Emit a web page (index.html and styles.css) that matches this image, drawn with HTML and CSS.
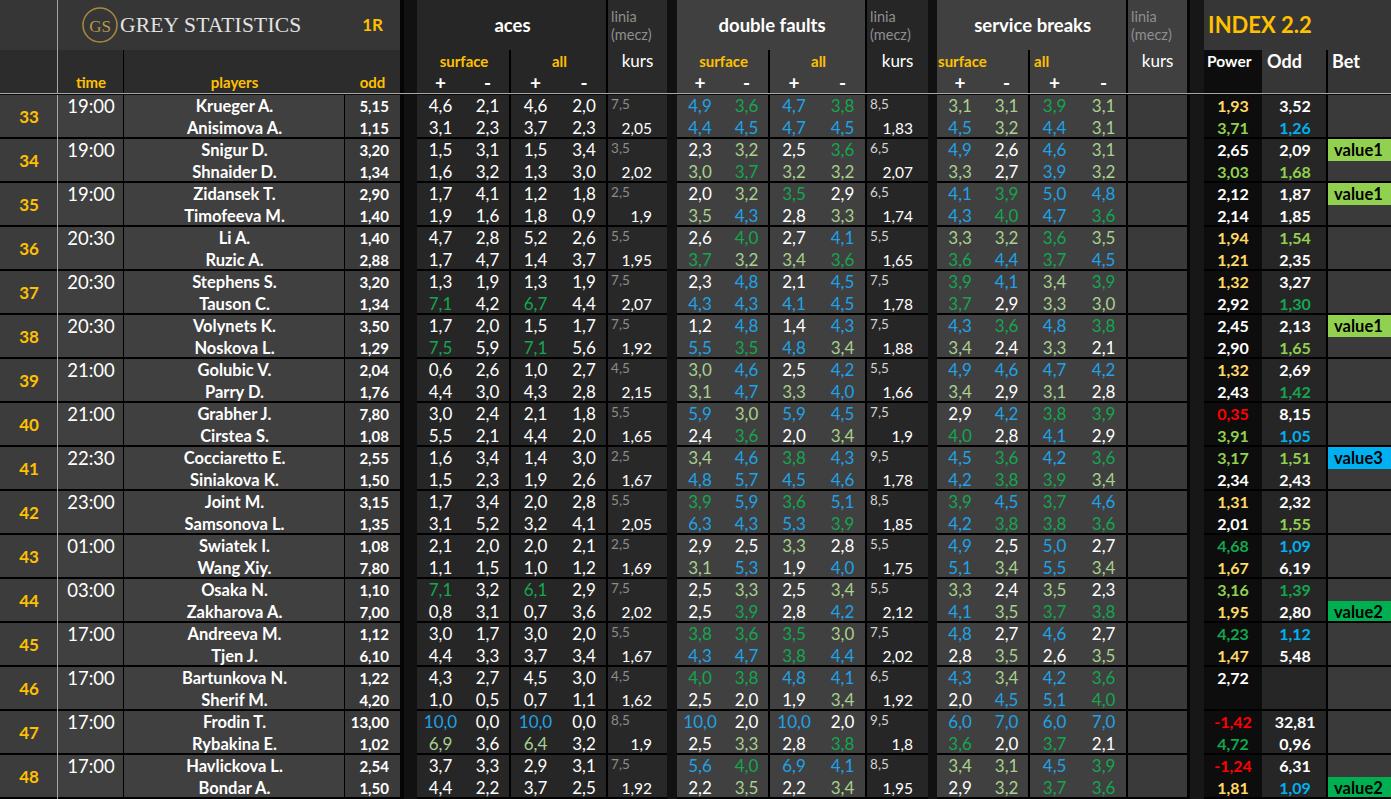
FILE: index.html
```html
<!DOCTYPE html>
<html lang="pl">
<head>
<meta charset="utf-8">
<title>Grey Statistics</title>
<link rel="stylesheet" href="styles.css">
</head>
<body>
<main class="wrap">
<table class="sheet">
<colgroup>
<col class="c-num"><col class="c-time"><col class="c-pl"><col class="c-odd"><col class="c-gap1">
<col class="c-a1"><col class="c-a2"><col class="c-a3"><col class="c-a4"><col class="c-ak"><col class="c-gap2">
<col class="c-d1"><col class="c-d2"><col class="c-d3"><col class="c-d4"><col class="c-dk"><col class="c-gap3">
<col class="c-s1"><col class="c-s2"><col class="c-s3"><col class="c-s4"><col class="c-sk"><col class="c-gap4">
<col class="c-pw"><col class="c-o2"><col class="c-bet">
</colgroup>
<thead>
<tr class="h1">
<th class="hn1"></th>
<th class="title" colspan="3"><div class="brand"><svg class="logo" viewBox="0 0 36 36" width="36" height="36"><circle cx="18" cy="18" r="17" fill="none" stroke="#a8893f" stroke-width="1.5"/><text x="18" y="24.5" text-anchor="middle" font-family="Liberation Serif, serif" font-size="17" fill="#b8964a">GS</text></svg><span class="brand-name">GREY STATISTICS</span><span class="round">1R</span></div></th>
<th class="gap ga" rowspan="3"></th>
<th class="grp dark vr" colspan="4">aces</th>
<th class="linia ak-h"><div class="linia-txt">linia<br>(mecz)</div></th>
<th class="gap" rowspan="3"></th>
<th class="grp mid vr" colspan="4">double faults</th>
<th class="linia dk-h"><div class="linia-txt">linia<br>(mecz)</div></th>
<th class="gap" rowspan="3"></th>
<th class="grp mid vr" colspan="4">service breaks</th>
<th class="linia sk-h"><div class="linia-txt">linia<br>(mecz)</div></th>
<th class="gap gd" rowspan="3"></th>
<th class="index" colspan="3">INDEX 2.2</th>
</tr>
<tr class="h2">
<th class="hn2" rowspan="2"></th>
<th class="lab time-h" rowspan="2">time</th>
<th class="lab" rowspan="2">players</th>
<th class="lab" rowspan="2">odd</th>
<th class="sub dark vr" colspan="2">surface</th>
<th class="sub dark vr" colspan="2">all</th>
<th class="kurs-h ak-h" rowspan="2">kurs</th>
<th class="sub mid vr" colspan="2">surface</th>
<th class="sub mid vr" colspan="2">all</th>
<th class="kurs-h dk-h" rowspan="2">kurs</th>
<th class="sub mid vr left" colspan="2">surface</th>
<th class="sub mid vr left2" colspan="2">all</th>
<th class="kurs-h sk-h" rowspan="2">kurs</th>
<th class="pow-h" rowspan="2">Power</th>
<th class="odd-h" rowspan="2">Odd</th>
<th class="bet-h" rowspan="2">Bet</th>
</tr>
<tr class="h3">
<th class="pm dark">+</th><th class="pm dark vr">-</th><th class="pm dark">+</th><th class="pm dark vr">-</th>
<th class="pm mid">+</th><th class="pm mid vr">-</th><th class="pm mid">+</th><th class="pm mid vr">-</th>
<th class="pm mid">+</th><th class="pm mid vr">-</th><th class="pm mid">+</th><th class="pm mid vr">-</th>
</tr>
<tr class="sep"><td colspan="26"></td></tr>
</thead>
<tbody>
<tr class="l1"><td class="num" rowspan="2">33</td><td class="time" rowspan="2">19:00</td><td class="pl">Krueger A.</td><td class="od">5,15</td><td class="gap ga" rowspan="32"></td><td>4,6</td><td class="vr">2,1</td><td>4,6</td><td class="vr">2,0</td><td class="ln">7,5</td><td class="gap" rowspan="32"></td><td class="b">4,9</td><td class="vr g">3,6</td><td class="b">4,7</td><td class="vr g">3,8</td><td class="ln lt">8,5</td><td class="gap" rowspan="32"></td><td class="lg">3,1</td><td class="vr lg">3,1</td><td class="g">3,9</td><td class="vr lg">3,1</td><td class="sk" rowspan="2"></td><td class="gap gd" rowspan="32"></td><td class="pw y">1,93</td><td class="o2">3,52</td><td class="bet"></td></tr>
<tr class="l2"><td class="pl">Anisimova A.</td><td class="od">1,15</td><td>3,1</td><td class="vr">2,3</td><td>3,7</td><td class="vr">2,3</td><td class="ku">2,05</td><td class="b">4,4</td><td class="vr b">4,5</td><td class="b">4,7</td><td class="vr b">4,5</td><td class="ku">1,83</td><td class="b">4,5</td><td class="vr lg">3,2</td><td class="b">4,4</td><td class="vr lg">3,1</td><td class="pw lm">3,71</td><td class="o2 bb">1,26</td><td class="bet"></td></tr>

<tr class="l1"><td class="num" rowspan="2">34</td><td class="time" rowspan="2">19:00</td><td class="pl">Snigur D.</td><td class="od">3,20</td><td>1,5</td><td class="vr">3,1</td><td>1,5</td><td class="vr">3,4</td><td class="ln">3,5</td><td>2,3</td><td class="vr lg">3,2</td><td>2,5</td><td class="vr g">3,6</td><td class="ln lt">6,5</td><td class="b">4,9</td><td class="vr">2,6</td><td class="b">4,6</td><td class="vr lg">3,1</td><td class="sk" rowspan="2"></td><td class="pw">2,65</td><td class="o2">2,09</td><td class="bet v1">value1</td></tr>
<tr class="l2"><td class="pl">Shnaider D.</td><td class="od">1,34</td><td>1,6</td><td class="vr">3,2</td><td>1,3</td><td class="vr">3,0</td><td class="ku">2,02</td><td class="lg">3,0</td><td class="vr g">3,7</td><td class="lg">3,2</td><td class="vr lg">3,2</td><td class="ku">2,07</td><td class="lg">3,3</td><td class="vr">2,7</td><td class="b">3,9</td><td class="vr lg">3,2</td><td class="pw lm">3,03</td><td class="o2 lm">1,68</td><td class="bet"></td></tr>

<tr class="l1"><td class="num" rowspan="2">35</td><td class="time" rowspan="2">19:00</td><td class="pl">Zidansek T.</td><td class="od">2,90</td><td>1,7</td><td class="vr">4,1</td><td>1,2</td><td class="vr">1,8</td><td class="ln">2,5</td><td>2,0</td><td class="vr lg">3,2</td><td class="g">3,5</td><td class="vr">2,9</td><td class="ln lt">6,5</td><td class="b">4,1</td><td class="vr g">3,9</td><td class="b">5,0</td><td class="vr b">4,8</td><td class="sk" rowspan="2"></td><td class="pw">2,12</td><td class="o2">1,87</td><td class="bet v1">value1</td></tr>
<tr class="l2"><td class="pl">Timofeeva M.</td><td class="od">1,40</td><td>1,9</td><td class="vr">1,6</td><td>1,8</td><td class="vr">0,9</td><td class="ku">1,9</td><td class="lg">3,5</td><td class="vr b">4,3</td><td>2,8</td><td class="vr lg">3,3</td><td class="ku">1,74</td><td class="b">4,3</td><td class="vr g">4,0</td><td class="b">4,7</td><td class="vr g">3,6</td><td class="pw">2,14</td><td class="o2">1,85</td><td class="bet"></td></tr>

<tr class="l1"><td class="num" rowspan="2">36</td><td class="time" rowspan="2">20:30</td><td class="pl">Li A.</td><td class="od">1,40</td><td>4,7</td><td class="vr">2,8</td><td>5,2</td><td class="vr">2,6</td><td class="ln">5,5</td><td>2,6</td><td class="vr g">4,0</td><td>2,7</td><td class="vr b">4,1</td><td class="ln lt">5,5</td><td class="lg">3,3</td><td class="vr lg">3,2</td><td class="g">3,6</td><td class="vr lg">3,5</td><td class="sk" rowspan="2"></td><td class="pw y">1,94</td><td class="o2 lm">1,54</td><td class="bet"></td></tr>
<tr class="l2"><td class="pl">Ruzic A.</td><td class="od">2,88</td><td>1,7</td><td class="vr">4,7</td><td>1,4</td><td class="vr">3,7</td><td class="ku">1,95</td><td class="g">3,7</td><td class="vr lg">3,2</td><td class="lg">3,4</td><td class="vr g">3,6</td><td class="ku">1,65</td><td class="g">3,6</td><td class="vr b">4,4</td><td class="g">3,7</td><td class="vr b">4,5</td><td class="pw y">1,21</td><td class="o2">2,35</td><td class="bet"></td></tr>

<tr class="l1"><td class="num" rowspan="2">37</td><td class="time" rowspan="2">20:30</td><td class="pl">Stephens S.</td><td class="od">3,20</td><td>1,3</td><td class="vr">1,9</td><td>1,3</td><td class="vr">1,9</td><td class="ln">7,5</td><td>2,3</td><td class="vr b">4,8</td><td>2,1</td><td class="vr b">4,5</td><td class="ln lt">7,5</td><td class="g">3,9</td><td class="vr b">4,1</td><td class="lg">3,4</td><td class="vr g">3,9</td><td class="sk" rowspan="2"></td><td class="pw y">1,32</td><td class="o2">3,27</td><td class="bet"></td></tr>
<tr class="l2"><td class="pl">Tauson C.</td><td class="od">1,34</td><td class="g">7,1</td><td class="vr">4,2</td><td class="g">6,7</td><td class="vr">4,4</td><td class="ku">2,07</td><td class="b">4,3</td><td class="vr b">4,3</td><td class="b">4,1</td><td class="vr b">4,5</td><td class="ku">1,78</td><td class="g">3,7</td><td class="vr">2,9</td><td class="lg">3,3</td><td class="vr lg">3,0</td><td class="pw">2,92</td><td class="o2 g">1,30</td><td class="bet"></td></tr>

<tr class="l1"><td class="num" rowspan="2">38</td><td class="time" rowspan="2">20:30</td><td class="pl">Volynets K.</td><td class="od">3,50</td><td>1,7</td><td class="vr">2,0</td><td>1,5</td><td class="vr">1,7</td><td class="ln">7,5</td><td>1,2</td><td class="vr b">4,8</td><td>1,4</td><td class="vr b">4,3</td><td class="ln lt">7,5</td><td class="b">4,3</td><td class="vr g">3,6</td><td class="b">4,8</td><td class="vr g">3,8</td><td class="sk" rowspan="2"></td><td class="pw">2,45</td><td class="o2">2,13</td><td class="bet v1">value1</td></tr>
<tr class="l2"><td class="pl">Noskova L.</td><td class="od">1,29</td><td class="g">7,5</td><td class="vr">5,9</td><td class="g">7,1</td><td class="vr">5,6</td><td class="ku">1,92</td><td class="b">5,5</td><td class="vr g">3,5</td><td class="b">4,8</td><td class="vr lg">3,4</td><td class="ku">1,88</td><td class="lg">3,4</td><td class="vr">2,4</td><td class="lg">3,3</td><td class="vr">2,1</td><td class="pw">2,90</td><td class="o2 lm">1,65</td><td class="bet"></td></tr>

<tr class="l1"><td class="num" rowspan="2">39</td><td class="time" rowspan="2">21:00</td><td class="pl">Golubic V.</td><td class="od">2,04</td><td>0,6</td><td class="vr">2,6</td><td>1,0</td><td class="vr">2,7</td><td class="ln">4,5</td><td class="lg">3,0</td><td class="vr b">4,6</td><td>2,5</td><td class="vr b">4,2</td><td class="ln lt">5,5</td><td class="b">4,9</td><td class="vr b">4,6</td><td class="b">4,7</td><td class="vr b">4,2</td><td class="sk" rowspan="2"></td><td class="pw y">1,32</td><td class="o2">2,69</td><td class="bet"></td></tr>
<tr class="l2"><td class="pl">Parry D.</td><td class="od">1,76</td><td>4,4</td><td class="vr">3,0</td><td>4,3</td><td class="vr">2,8</td><td class="ku">2,15</td><td class="lg">3,1</td><td class="vr b">4,7</td><td class="lg">3,3</td><td class="vr b">4,0</td><td class="ku">1,66</td><td class="lg">3,4</td><td class="vr">2,9</td><td class="lg">3,1</td><td class="vr">2,8</td><td class="pw">2,43</td><td class="o2 g">1,42</td><td class="bet"></td></tr>

<tr class="l1"><td class="num" rowspan="2">40</td><td class="time" rowspan="2">21:00</td><td class="pl">Grabher J.</td><td class="od">7,80</td><td>3,0</td><td class="vr">2,4</td><td>2,1</td><td class="vr">1,8</td><td class="ln">5,5</td><td class="b">5,9</td><td class="vr lg">3,0</td><td class="b">5,9</td><td class="vr b">4,5</td><td class="ln lt">7,5</td><td>2,9</td><td class="vr b">4,2</td><td class="g">3,8</td><td class="vr g">3,9</td><td class="sk" rowspan="2"></td><td class="pw r">0,35</td><td class="o2">8,15</td><td class="bet"></td></tr>
<tr class="l2"><td class="pl">Cirstea S.</td><td class="od">1,08</td><td>5,5</td><td class="vr">2,1</td><td>4,4</td><td class="vr">2,0</td><td class="ku">1,65</td><td>2,4</td><td class="vr g">3,6</td><td>2,0</td><td class="vr lg">3,4</td><td class="ku">1,9</td><td class="g">4,0</td><td class="vr">2,8</td><td class="b">4,1</td><td class="vr">2,9</td><td class="pw lm">3,91</td><td class="o2 bb">1,05</td><td class="bet"></td></tr>

<tr class="l1"><td class="num" rowspan="2">41</td><td class="time" rowspan="2">22:30</td><td class="pl">Cocciaretto E.</td><td class="od">2,55</td><td>1,6</td><td class="vr">3,4</td><td>1,4</td><td class="vr">3,0</td><td class="ln">2,5</td><td class="lg">3,4</td><td class="vr b">4,6</td><td class="g">3,8</td><td class="vr b">4,3</td><td class="ln lt">9,5</td><td class="b">4,5</td><td class="vr g">3,6</td><td class="b">4,2</td><td class="vr g">3,6</td><td class="sk" rowspan="2"></td><td class="pw lm">3,17</td><td class="o2 lm">1,51</td><td class="bet v3">value3</td></tr>
<tr class="l2"><td class="pl">Siniakova K.</td><td class="od">1,50</td><td>1,5</td><td class="vr">2,3</td><td>1,9</td><td class="vr">2,6</td><td class="ku">1,67</td><td class="b">4,8</td><td class="vr b">5,7</td><td class="b">4,5</td><td class="vr b">4,6</td><td class="ku">1,78</td><td class="b">4,2</td><td class="vr g">3,8</td><td class="g">3,9</td><td class="vr lg">3,4</td><td class="pw">2,34</td><td class="o2">2,43</td><td class="bet"></td></tr>

<tr class="l1"><td class="num" rowspan="2">42</td><td class="time" rowspan="2">23:00</td><td class="pl">Joint M.</td><td class="od">3,15</td><td>1,7</td><td class="vr">3,4</td><td>2,0</td><td class="vr">2,8</td><td class="ln">5,5</td><td class="g">3,9</td><td class="vr b">5,9</td><td class="g">3,6</td><td class="vr b">5,1</td><td class="ln lt">8,5</td><td class="g">3,9</td><td class="vr b">4,5</td><td class="g">3,7</td><td class="vr b">4,6</td><td class="sk" rowspan="2"></td><td class="pw y">1,31</td><td class="o2">2,32</td><td class="bet"></td></tr>
<tr class="l2"><td class="pl">Samsonova L.</td><td class="od">1,35</td><td>3,1</td><td class="vr">5,2</td><td>3,2</td><td class="vr">4,1</td><td class="ku">2,05</td><td class="b">6,3</td><td class="vr b">4,3</td><td class="b">5,3</td><td class="vr g">3,9</td><td class="ku">1,85</td><td class="b">4,2</td><td class="vr g">3,8</td><td class="g">3,8</td><td class="vr g">3,6</td><td class="pw">2,01</td><td class="o2 lm">1,55</td><td class="bet"></td></tr>

<tr class="l1"><td class="num" rowspan="2">43</td><td class="time" rowspan="2">01:00</td><td class="pl">Swiatek I.</td><td class="od">1,08</td><td>2,1</td><td class="vr">2,0</td><td>2,0</td><td class="vr">2,1</td><td class="ln">2,5</td><td>2,9</td><td class="vr">2,5</td><td class="lg">3,3</td><td class="vr">2,8</td><td class="ln lt">5,5</td><td class="b">4,9</td><td class="vr">2,5</td><td class="b">5,0</td><td class="vr">2,7</td><td class="sk" rowspan="2"></td><td class="pw g">4,68</td><td class="o2 bb">1,09</td><td class="bet"></td></tr>
<tr class="l2"><td class="pl">Wang Xiy.</td><td class="od">7,80</td><td>1,1</td><td class="vr">1,5</td><td>1,0</td><td class="vr">1,2</td><td class="ku">1,69</td><td class="lg">3,1</td><td class="vr b">5,3</td><td>1,9</td><td class="vr b">4,0</td><td class="ku">1,75</td><td class="b">5,1</td><td class="vr lg">3,4</td><td class="b">5,5</td><td class="vr lg">3,4</td><td class="pw y">1,67</td><td class="o2">6,19</td><td class="bet"></td></tr>

<tr class="l1"><td class="num" rowspan="2">44</td><td class="time" rowspan="2">03:00</td><td class="pl">Osaka N.</td><td class="od">1,10</td><td class="g">7,1</td><td class="vr">3,2</td><td class="g">6,1</td><td class="vr">2,9</td><td class="ln">7,5</td><td>2,5</td><td class="vr lg">3,3</td><td>2,5</td><td class="vr lg">3,4</td><td class="ln lt">5,5</td><td class="lg">3,3</td><td class="vr">2,4</td><td class="lg">3,5</td><td class="vr">2,3</td><td class="sk" rowspan="2"></td><td class="pw lm">3,16</td><td class="o2 g">1,39</td><td class="bet"></td></tr>
<tr class="l2"><td class="pl">Zakharova A.</td><td class="od">7,00</td><td>0,8</td><td class="vr">3,1</td><td>0,7</td><td class="vr">3,6</td><td class="ku">2,02</td><td>2,5</td><td class="vr g">3,9</td><td>2,8</td><td class="vr b">4,2</td><td class="ku">2,12</td><td class="b">4,1</td><td class="vr lg">3,5</td><td class="g">3,7</td><td class="vr g">3,8</td><td class="pw y">1,95</td><td class="o2">2,80</td><td class="bet v2">value2</td></tr>

<tr class="l1"><td class="num" rowspan="2">45</td><td class="time" rowspan="2">17:00</td><td class="pl">Andreeva M.</td><td class="od">1,12</td><td>3,0</td><td class="vr">1,7</td><td>3,0</td><td class="vr">2,0</td><td class="ln">5,5</td><td class="g">3,8</td><td class="vr g">3,6</td><td class="g">3,5</td><td class="vr lg">3,0</td><td class="ln lt">7,5</td><td class="b">4,8</td><td class="vr">2,7</td><td class="b">4,6</td><td class="vr">2,7</td><td class="sk" rowspan="2"></td><td class="pw g">4,23</td><td class="o2 bb">1,12</td><td class="bet"></td></tr>
<tr class="l2"><td class="pl">Tjen J.</td><td class="od">6,10</td><td>4,4</td><td class="vr">3,3</td><td>3,7</td><td class="vr">3,4</td><td class="ku">1,67</td><td class="b">4,3</td><td class="vr b">4,7</td><td class="g">3,8</td><td class="vr b">4,4</td><td class="ku">2,02</td><td>2,8</td><td class="vr lg">3,5</td><td>2,6</td><td class="vr lg">3,5</td><td class="pw y">1,47</td><td class="o2">5,48</td><td class="bet"></td></tr>

<tr class="l1"><td class="num" rowspan="2">46</td><td class="time" rowspan="2">17:00</td><td class="pl">Bartunkova N.</td><td class="od">1,22</td><td>4,3</td><td class="vr">2,7</td><td>4,5</td><td class="vr">3,0</td><td class="ln">4,5</td><td class="g">4,0</td><td class="vr g">3,8</td><td class="b">4,8</td><td class="vr b">4,1</td><td class="ln lt">6,5</td><td class="b">4,3</td><td class="vr lg">3,4</td><td class="b">4,2</td><td class="vr g">3,6</td><td class="sk" rowspan="2"></td><td class="pw">2,72</td><td class="o2"></td><td class="bet"></td></tr>
<tr class="l2"><td class="pl">Sherif M.</td><td class="od">4,20</td><td>1,0</td><td class="vr">0,5</td><td>0,7</td><td class="vr">1,1</td><td class="ku">1,62</td><td>2,5</td><td class="vr">2,0</td><td>1,9</td><td class="vr lg">3,4</td><td class="ku">1,92</td><td>2,0</td><td class="vr b">4,5</td><td class="b">5,1</td><td class="vr g">4,0</td><td class="pw"></td><td class="o2"></td><td class="bet"></td></tr>

<tr class="l1"><td class="num" rowspan="2">47</td><td class="time" rowspan="2">17:00</td><td class="pl">Frodin T.</td><td class="od">13,00</td><td class="b">10,0</td><td class="vr">0,0</td><td class="b">10,0</td><td class="vr">0,0</td><td class="ln">8,5</td><td class="b">10,0</td><td class="vr">2,0</td><td class="b">10,0</td><td class="vr">2,0</td><td class="ln lt">9,5</td><td class="b">6,0</td><td class="vr b">7,0</td><td class="b">6,0</td><td class="vr b">7,0</td><td class="sk" rowspan="2"></td><td class="pw r">-1,42</td><td class="o2">32,81</td><td class="bet"></td></tr>
<tr class="l2"><td class="pl">Rybakina E.</td><td class="od">1,02</td><td class="lg">6,9</td><td class="vr">3,6</td><td class="lg">6,4</td><td class="vr">3,2</td><td class="ku">1,9</td><td>2,5</td><td class="vr lg">3,3</td><td>2,8</td><td class="vr g">3,8</td><td class="ku">1,8</td><td class="g">3,6</td><td class="vr">2,0</td><td class="g">3,7</td><td class="vr">2,1</td><td class="pw g">4,72</td><td class="o2">0,96</td><td class="bet"></td></tr>

<tr class="l1"><td class="num" rowspan="2">48</td><td class="time" rowspan="2">17:00</td><td class="pl">Havlickova L.</td><td class="od">2,54</td><td>3,7</td><td class="vr">3,3</td><td>2,9</td><td class="vr">3,1</td><td class="ln">7,5</td><td class="b">5,6</td><td class="vr g">4,0</td><td class="b">6,9</td><td class="vr b">4,1</td><td class="ln lt">8,5</td><td class="lg">3,4</td><td class="vr lg">3,1</td><td class="b">4,5</td><td class="vr g">3,9</td><td class="sk" rowspan="2"></td><td class="pw r">-1,24</td><td class="o2">6,31</td><td class="bet"></td></tr>
<tr class="l2"><td class="pl">Bondar A.</td><td class="od">1,50</td><td>4,4</td><td class="vr">2,2</td><td>3,7</td><td class="vr">2,5</td><td class="ku">1,92</td><td>2,2</td><td class="vr lg">3,5</td><td>2,2</td><td class="vr lg">3,4</td><td class="ku">1,95</td><td>2,9</td><td class="vr lg">3,2</td><td class="g">3,7</td><td class="vr g">3,6</td><td class="pw y">1,81</td><td class="o2 bb">1,09</td><td class="bet v2">value2</td></tr>
</tbody>
</table>
</main>
</body>
</html>
```

FILE: styles.css
```css
html, body {
  margin: 0;
  padding: 0;
  background: #0e0e0e;
}

body {
  width: 1391px;
  height: 799px;
  overflow: hidden;
  font-family: Lato, "Open Sans", "Liberation Sans", sans-serif;
  color: #ffffff;
}

.wrap {
  display: block;
  width: 1391px;
}

.sheet {
  border-collapse: separate;
  border-spacing: 0;
  table-layout: fixed;
  width: 1391px;
}

td, th {
  padding: 0;
  white-space: nowrap;
  overflow: hidden;
  font-size: 17px;
  font-weight: 400;
  line-height: 22px;
  text-align: center;
  vertical-align: middle;
  color: #ffffff;
  --l: 0px;
  --lc: #050505;
  --r: 0px;
  --rc: #000000;
  --b: 0px;
  box-shadow:
    inset var(--l) 0 0 var(--lc),
    inset calc(-1 * var(--r)) 0 0 var(--rc),
    inset 0 calc(-1 * var(--b)) 0 #000000;
}

/* columns */
.c-num { width: 58px; background: #3c3c3c; }
.c-time { width: 66px; background: #404040; }
.c-pl { width: 221px; background: #404040; }
.c-odd { width: 55px; background: #3a3a3a; }
.c-gap1 { width: 17px; }
.c-a1 { width: 47px; background: #262626; }
.c-a2 { width: 47px; background: #262626; }
.c-a3 { width: 49px; background: #262626; }
.c-a4 { width: 48px; background: #262626; }
.c-ak { width: 59px; background: #282828; }
.c-gap2 { width: 10px; }
.c-d1 { width: 46px; background: #404040; }
.c-d2 { width: 47px; background: #404040; }
.c-d3 { width: 48px; background: #404040; }
.c-d4 { width: 49px; background: #404040; }
.c-dk { width: 61px; background: #262626; }
.c-gap3 { width: 9px; }
.c-s1 { width: 46px; background: #404040; }
.c-s2 { width: 47px; background: #404040; }
.c-s3 { width: 49px; background: #404040; }
.c-s4 { width: 49px; background: #404040; }
.c-sk { width: 59px; background: #3a3a3a; }
.c-gap4 { width: 17px; }
.c-pw { width: 58px; background: #0d0d0d; }
.c-o2 { width: 66px; background: #262626; }
.c-bet { width: 63px; background: #3a3a3a; }

/* shared lines */
.vr { --r: 2px; }

.gap { background: #111111; }
.ga { --l: 4px; }
.gd { --l: 3px; background: #171717; }

/* header */
.h1 > th { height: 50px; }
.h2 > th { height: 22px; line-height: 22px; }
.h3 > th { height: 21px; line-height: 21px; }

.hn1, .title { background: #363636; }
.hn2 { background: #2c2c2c; }
.hn1, .hn2, .num { --r: 1px; --rc: #a6a6a6; }

.brand {
  display: flex;
  align-items: center;
  height: 50px;
  padding: 0 17px 0 24px;
}

.logo {
  flex: none;
  display: block;
}

.brand-name {
  margin-left: 2px;
  font-family: "Liberation Serif", "DejaVu Serif", serif;
  font-size: 21.5px;
  color: #e2e2e2;
  letter-spacing: 0.2px;
}

.round {
  margin-left: auto;
  color: #ffc000;
  font-weight: 700;
  font-size: 17px;
}

.grp {
  font-weight: 700;
  font-size: 18.5px;
}

.dark { background: #262626; }
.mid { background: #404040; }

.linia { vertical-align: top; text-align: left; }
.linia-txt {
  padding: 8px 0 0 3px;
  font-size: 14.5px;
  line-height: 18px;
  color: #8f8f8f;
}

.ak-h { background: #2a2a2a; }
.dk-h { background: #262626; }
.sk-h { background: #404040; }

.kurs-h {
  vertical-align: top;
  font-size: 17px;
}

.sub {
  color: #ffc000;
  font-weight: 700;
  font-size: 15px;
}
.sub.left { text-align: left; padding-left: 1px; }
.sub.left2 { text-align: left; padding-left: 4px; }

.pm {
  font-weight: 700;
  font-size: 19px;
  overflow: visible;
}

.lab {
  background: #2c2c2c;
  color: #ffc000;
  font-weight: 700;
  font-size: 15px;
  vertical-align: bottom;
  line-height: 21px;
}
.time-h { --r: 1px; }

.index {
  background: #363636;
  color: #ffc000;
  font-weight: 700;
  font-size: 22px;
  text-align: left;
  padding-left: 4px;
}

.pow-h, .odd-h, .bet-h {
  vertical-align: top;
  text-align: left;
  font-weight: 700;
}
.pow-h { background: #0d0d0d; font-size: 15.5px; padding-left: 3px; }
.odd-h { background: #363636; font-size: 18px; padding-left: 5px; --r: 2px; }
.bet-h { background: #363636; font-size: 18px; padding-left: 4px; }

.sep > td {
  height: 1px;
  background: #a6a6a6;
  border-bottom: 1px solid #0a0a0a;
  font-size: 0;
  line-height: 0;
}

/* body */
.l1 > td, .l2 > td { height: 22px; }
.l2 > td { --b: 2px; }

.num {
  color: #ffc000;
  font-weight: 700;
  font-size: 17px;
  --b: 2px;
}

.time {
  vertical-align: top;
  font-size: 18.5px;
  --r: 1px;
  --b: 2px;
}

.pl {
  font-weight: 700;
  font-size: 16.5px;
  --r: 1px;
}

.od {
  font-weight: 700;
  font-size: 15px;
  text-align: right;
  padding-right: 11px;
}

.ln {
  vertical-align: top;
  text-align: left;
  padding-left: 3px;
  font-size: 13.5px;
  line-height: 18px;
  color: #8c8c8c;
}
.ln.lt { color: #d4d4d4; }

.ku {
  font-size: 15.5px;
  text-align: right;
  padding-right: 15px;
}

.sk { --b: 2px; }

.pw, .o2 {
  font-weight: 700;
  font-size: 16px;
}
.o2 { --r: 2px; }

.bet {
  text-align: left;
  padding-left: 6px;
  font-weight: 700;
  font-size: 16.5px;
  color: #000000;
}
.v1 { background: #92d050; }
.v2 { background: #00b050; }
.v3 { background: #00b0f0; }

/* value colours */
.b { color: #1fa2e6; }
.g { color: #14a64f; }
.lg { color: #a9d08e; }
.y { color: #ffd966; }
.lm { color: #92d050; }
.r { color: #ff0000; }
.bb { color: #00b0f0; }
```
